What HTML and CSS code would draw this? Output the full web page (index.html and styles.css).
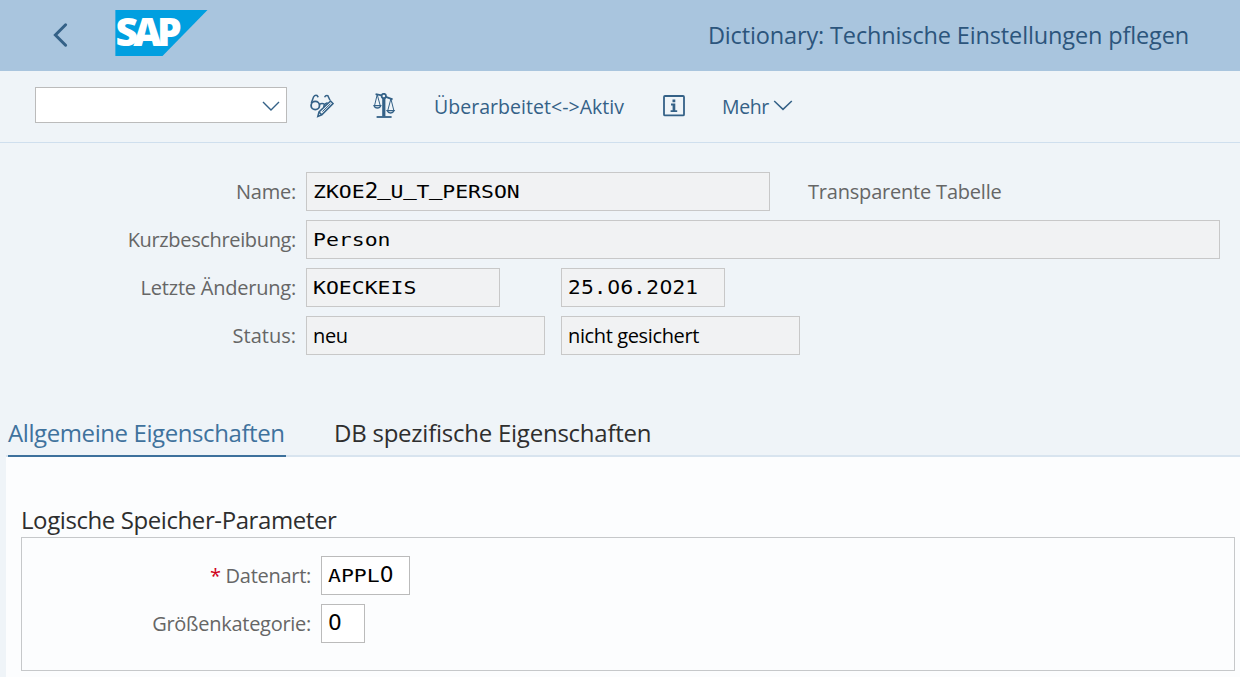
FILE: index.html
```html
<!DOCTYPE html>
<html lang="de">
<head>
<meta charset="utf-8">
<title>Dictionary: Technische Einstellungen pflegen</title>
<link rel="stylesheet" href="styles.css">
</head>
<body>
<header class="shell">
  <button class="back" aria-label="Zurück">
    <svg width="16" height="26" viewBox="0 0 16 26"><path d="M13.6 2.8 3.4 13 13.6 23.2" fill="none" stroke="#346187" stroke-width="3" stroke-linecap="round"/></svg>
  </button>
  <svg class="logo" width="93" height="46" viewBox="0 0 93 46">
    <path d="M0.4 0H92.5L47.5 46H0.4Z" fill="#009fe0"/>
    <text x="0.6" y="36" textLength="66" lengthAdjust="spacing" class="logo-text">SAP</text>
  </svg>
  <h1 class="title">Dictionary: Technische Einstellungen pflegen</h1>
</header>

<nav class="toolbar">
  <div class="combo">
    <svg width="18" height="11" viewBox="0 0 18 11"><path d="M1 1 9 9 17 1" fill="none" stroke="#346187" stroke-width="1.4"/></svg>
  </div>
  <svg class="ico-display" width="24" height="24" viewBox="0 0 24 24" fill="none" stroke="#346187" stroke-width="1.5">
    <circle cx="5.3" cy="11.5" r="4.2" stroke-width="1.8"/>
    <path d="M1.3 9 3.6 2.8Q4.8.9 7 1.5L8.3 3.2M9.4 10.4Q12 8.6 14.4 10.2M14.6 3.2Q15.6 1 17.8 1.6L20 6.3M13.8 13.4Q13.4 10.2 17.6 8.6"/>
    <path d="M7.8 22.4 9 18 20.6 7 23 9.6 11.8 20.8ZM9 18 11.8 20.8" stroke-width="1.5"/>
    <path d="M12.4 17.6 20.4 9.8" stroke-width="1"/>
  </svg>
  <svg class="ico-scale" width="24" height="25" viewBox="0 0 24 25" fill="none" stroke="#346187" stroke-width="1.4">
    <circle cx="11.8" cy="3" r="2.2" stroke-width="1.8"/>
    <path d="M3.6 1.2 9.7 2.4M13.9 3.8 20.6 6.4" stroke-width="1.8"/>
    <path d="M5.2 1.6 2.6 12.4M5.2 1.6 8.2 12.4M18.9 5.8 15.8 17.4M18.9 5.8 21.8 17.4" stroke-width="1"/>
    <path d="M2 12.6H8.8Q8 15 5.4 15T2 12.6ZM15 17.6H22.2Q21.2 20 18.6 20T15 17.6Z" stroke-width="1.3"/>
    <path d="M11.8 5V23.5" stroke-width="3.2"/>
    <path d="M4.6 24H19.6" stroke-width="1.8"/>
  </svg>
  <span class="action compare">Überarbeitet&lt;-&gt;Aktiv</span>
  <svg class="ico-info" width="22" height="22" viewBox="0 0 22 22">
    <rect x="1" y="1" width="20" height="19.4" rx="1" fill="none" stroke="#346187" stroke-width="1.8"/>
    <path d="M9.5 4.6H12.3V7.2H9.5ZM8 8.6H12.3V15.2H14.2V17H7.6V15.2H9.6V10.4H8Z" fill="#346187"/>
  </svg>
  <span class="action more">Mehr</span>
  <svg class="ico-more" width="20" height="11" viewBox="0 0 20 11"><path d="M1.2 1 10 9.4 18.8 1" fill="none" stroke="#346187" stroke-width="1.5"/></svg>
</nav>

<main>
  <section class="form head-form">
    <div class="row">
      <label>Name:</label>
      <div class="field w-name"><span class="mono">ZKOE<span class="num">2</span><span class="us">_</span>U<span class="us">_</span>T<span class="us">_</span>PERSON</span></div>
      <span class="note">Transparente Tabelle</span>
    </div>
    <div class="row">
      <label class="tight">Kurzbeschreibung:</label>
      <div class="field w-desc"><span class="mono">Person</span></div>
    </div>
    <div class="row">
      <label>Letzte Änderung:</label>
      <div class="field w-user"><span class="mono">KOECKEIS</span></div>
      <div class="field w-date"><span class="date">25<i>.</i>06<i>.</i>2021</span></div>
    </div>
    <div class="row">
      <label class="wide">Status:</label>
      <div class="field w-status">neu</div>
      <div class="field w-status">nicht gesichert</div>
    </div>
  </section>

  <div class="tabs">
    <div class="tab active">Allgemeine Eigenschaften</div>
    <div class="tab">DB spezifische Eigenschaften</div>
  </div>

  <section class="panel">
    <h2>Logische Speicher-Parameter</h2>
    <div class="form group">
      <div class="row">
        <label><span class="req">*</span> Datenart:</label>
        <div class="field input w-kind"><span class="mono">APPL<span class="num">0</span></span></div>
      </div>
      <div class="row">
        <label>Größenkategorie:</label>
        <div class="field input w-size"><span class="mono"><span class="num">0</span></span></div>
      </div>
    </div>
  </section>
</main>
</body>
</html>
```

FILE: styles.css
```css
* { box-sizing: border-box; }
html, body { height: 100%; }
body {
  margin: 0;
  display: flex;
  flex-direction: column;
  overflow: hidden;
  background: #eff4f8;
  font-family: "Open Sans", "Noto Sans", sans-serif;
  font-size: 20px;
  color: #000;
}
svg { display: block; flex: none; }

.shell {
  flex: none;
  height: 71px;
  display: flex;
  align-items: flex-start;
  background: #a9c5de;
}
.back { margin: 22px 0 0 52px; padding: 0; border: 0; background: none; }
.logo { margin: 10px 0 0 47px; }
.logo-text { font-family: "Open Sans", sans-serif; font-weight: 800; font-size: 39px; fill: #fff; }
.title {
  margin: 0 51px 0 auto;
  font-size: 23.5px;
  font-weight: 400;
  line-height: 70px;
  letter-spacing: -0.14px;
  color: #2c557c;
}

.toolbar {
  flex: none;
  height: 72px;
  display: flex;
  align-items: flex-start;
  padding-left: 35px;
  border-bottom: 1px solid #cfdfee;
  color: #346187;
}
.combo {
  width: 252px;
  height: 36px;
  margin-top: 16px;
  padding-right: 6px;
  display: flex;
  align-items: center;
  justify-content: flex-end;
  background: #fff;
  border: 1px solid #bbb;
}
.combo svg { margin-top: 3px; }
.ico-display { margin: 23px 0 0 23px; }
.ico-scale { margin: 22px 0 0 38px; }
.action { font-size: 19.5px; line-height: 71px; white-space: nowrap; }
.compare { margin-left: 38px; width: 191px; letter-spacing: 0.04px; }
.more { width: 49px; letter-spacing: -0.4px; }
.ico-info { margin: 24px 37px 0 38px; }
.ico-more { margin: 29px 0 0 2px; }

main { flex: 1; display: flex; flex-direction: column; }
.form { display: flex; flex-direction: column; gap: 9px; }
.head-form { padding-top: 29px; height: 272px; flex: none; }
.row { display: flex; height: 39px; line-height: 39px; }
label {
  width: 296px;
  margin-right: 10px;
  text-align: right;
  color: #666;
  letter-spacing: -0.22px;
  white-space: nowrap;
}
.tight { letter-spacing: -0.35px; }
.wide { letter-spacing: 0; }
.field {
  height: 39px;
  padding-left: 6px;
  line-height: 37px;
  letter-spacing: -0.37px;
  white-space: nowrap;
  background: #f1f2f3;
  border: 1px solid #c8c8c8;
}
.field + .field { margin-left: 16px; }
.w-name { width: 464px; }
.w-desc { width: 914px; }
.w-user { width: 194px; }
.field.w-date { width: 164px; margin-left: 61px; }
.w-status { width: 239px; }
.w-kind { width: 89px; }
.w-size { width: 44px; }
.note { margin-left: 38px; color: #666; letter-spacing: -0.2px; }

.mono {
  display: inline-block;
  vertical-align: top;
  height: 37px;
  font-family: "DejaVu Sans Mono", monospace;
  font-size: 18.2px;
  letter-spacing: 0;
  transform: scaleX(1.18);
  transform-origin: 0 0;
}
.num {
  font-family: "DejaVu Sans Condensed", "DejaVu Sans", sans-serif;
  font-stretch: condensed;
  font-size: 20.4px;
  line-height: 1;
  letter-spacing: -0.72px;
}
.us { vertical-align: 2px; line-height: 0; -webkit-text-stroke: 0.5px #000; }
.date {
  display: inline-block;
  vertical-align: top;
  line-height: 36px;
  font-family: "DejaVu Sans", sans-serif;
  font-size: 20.3px;
  letter-spacing: 0.15px;
}
.date i { font-family: "DejaVu Sans Mono", monospace; font-style: normal; letter-spacing: 0.85px; }

.tabs {
  flex: none;
  height: 42px;
  margin-left: 6px;
  padding-left: 2px;
  display: flex;
  gap: 48px;
  border-bottom: 2px solid #d8e4ef;
}
.tab {
  height: 42px;
  font-size: 24px;
  line-height: 36px;
  letter-spacing: -0.24px;
  white-space: nowrap;
  color: #2e2e2e;
}
.tab.active {
  width: 278px;
  letter-spacing: -0.41px;
  color: #3f729d;
  border-bottom: 2px solid #3d719c;
}

.panel { flex: 1; margin-left: 6px; padding: 46px 5px 0 15px; background: #fcfdfe; }
h2 {
  margin: 0 0 1px;
  font-size: 24px;
  font-weight: 400;
  line-height: 33px;
  letter-spacing: -0.41px;
  color: #2e2e2e;
}
.group { height: 134px; padding-top: 18px; border: 1px solid #c6c8ca; }
.group label { width: 289px; letter-spacing: -0.28px; }
.input { background: #fff; border-color: #bbb; }
.req { color: #d0021b; }
```
